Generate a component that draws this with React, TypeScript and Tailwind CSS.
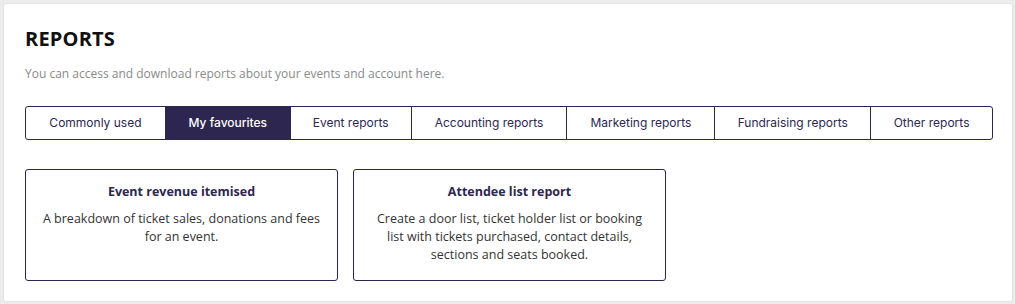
import React from "react";

const tabs = [
  { label: "Commonly used", w: 139 },
  { label: "My favourites", w: 125, active: true },
  { label: "Event reports", w: 121 },
  { label: "Accounting reports", w: 156 },
  { label: "Marketing reports", w: 148 },
  { label: "Fundraising reports", w: 156 },
  { label: "Other reports", w: 122 },
];

const cards = [
  {
    title: "Event revenue itemised",
    desc: "A breakdown of ticket sales, donations and fees for an event.",
  },
  {
    title: "Attendee list report",
    desc: "Create a door list, ticket holder list or booking list with tickets purchased, contact details, sections and seats booked.",
  },
];

export default function App() {
  return (
    <div className="w-[1015px] h-[304px] bg-[#ececec] p-[3px] pb-[2px] pr-[2px]" style={{ fontFamily: '"Open Sans", sans-serif' }}>
      <div className="h-full bg-white border border-[#e4e4e4] rounded-[3px] pl-[21px] pr-[19px] pt-[22px]">
        <h1 className="text-[20px] leading-[26px] font-bold text-[#111] tracking-[0.2px]">REPORTS</h1>
        <p className="mt-[14px] text-[12px] leading-[16px] text-[#8a8a8a]">
          You can access and download reports about your events and account here.
        </p>
        <div className="mt-[24px] flex h-[34px] w-[968px] border border-[#2d2650] rounded-[3px] overflow-hidden" style={{ fontFamily: 'Inter, sans-serif' }}>
          {tabs.map((t, i) => (
            <div
              key={t.label}
              style={{ width: t.w }}
              className={
                "flex items-center justify-center text-[12px] " +
                (i > 0 ? "border-l border-[#2d2650] " : "") +
                (t.active ? "bg-[#2d2650] text-white font-medium" : "text-[#2d2650]")
              }
            >
              {t.label}
            </div>
          ))}
        </div>
        <div className="mt-[29px] flex gap-[15px]">
          {cards.map((c) => (
            <div
              key={c.title}
              className="w-[313px] h-[112px] border border-[#2d2650] rounded-[3px] px-[15px] pt-[13px] text-center"
            >
              <div className="text-[12.5px] leading-[18px] font-bold text-[#2d2650]">{c.title}</div>
              <div className="mt-[9px] text-[12.5px] leading-[18px] text-[#333]">{c.desc}</div>
            </div>
          ))}
        </div>
      </div>
    </div>
  );
}
